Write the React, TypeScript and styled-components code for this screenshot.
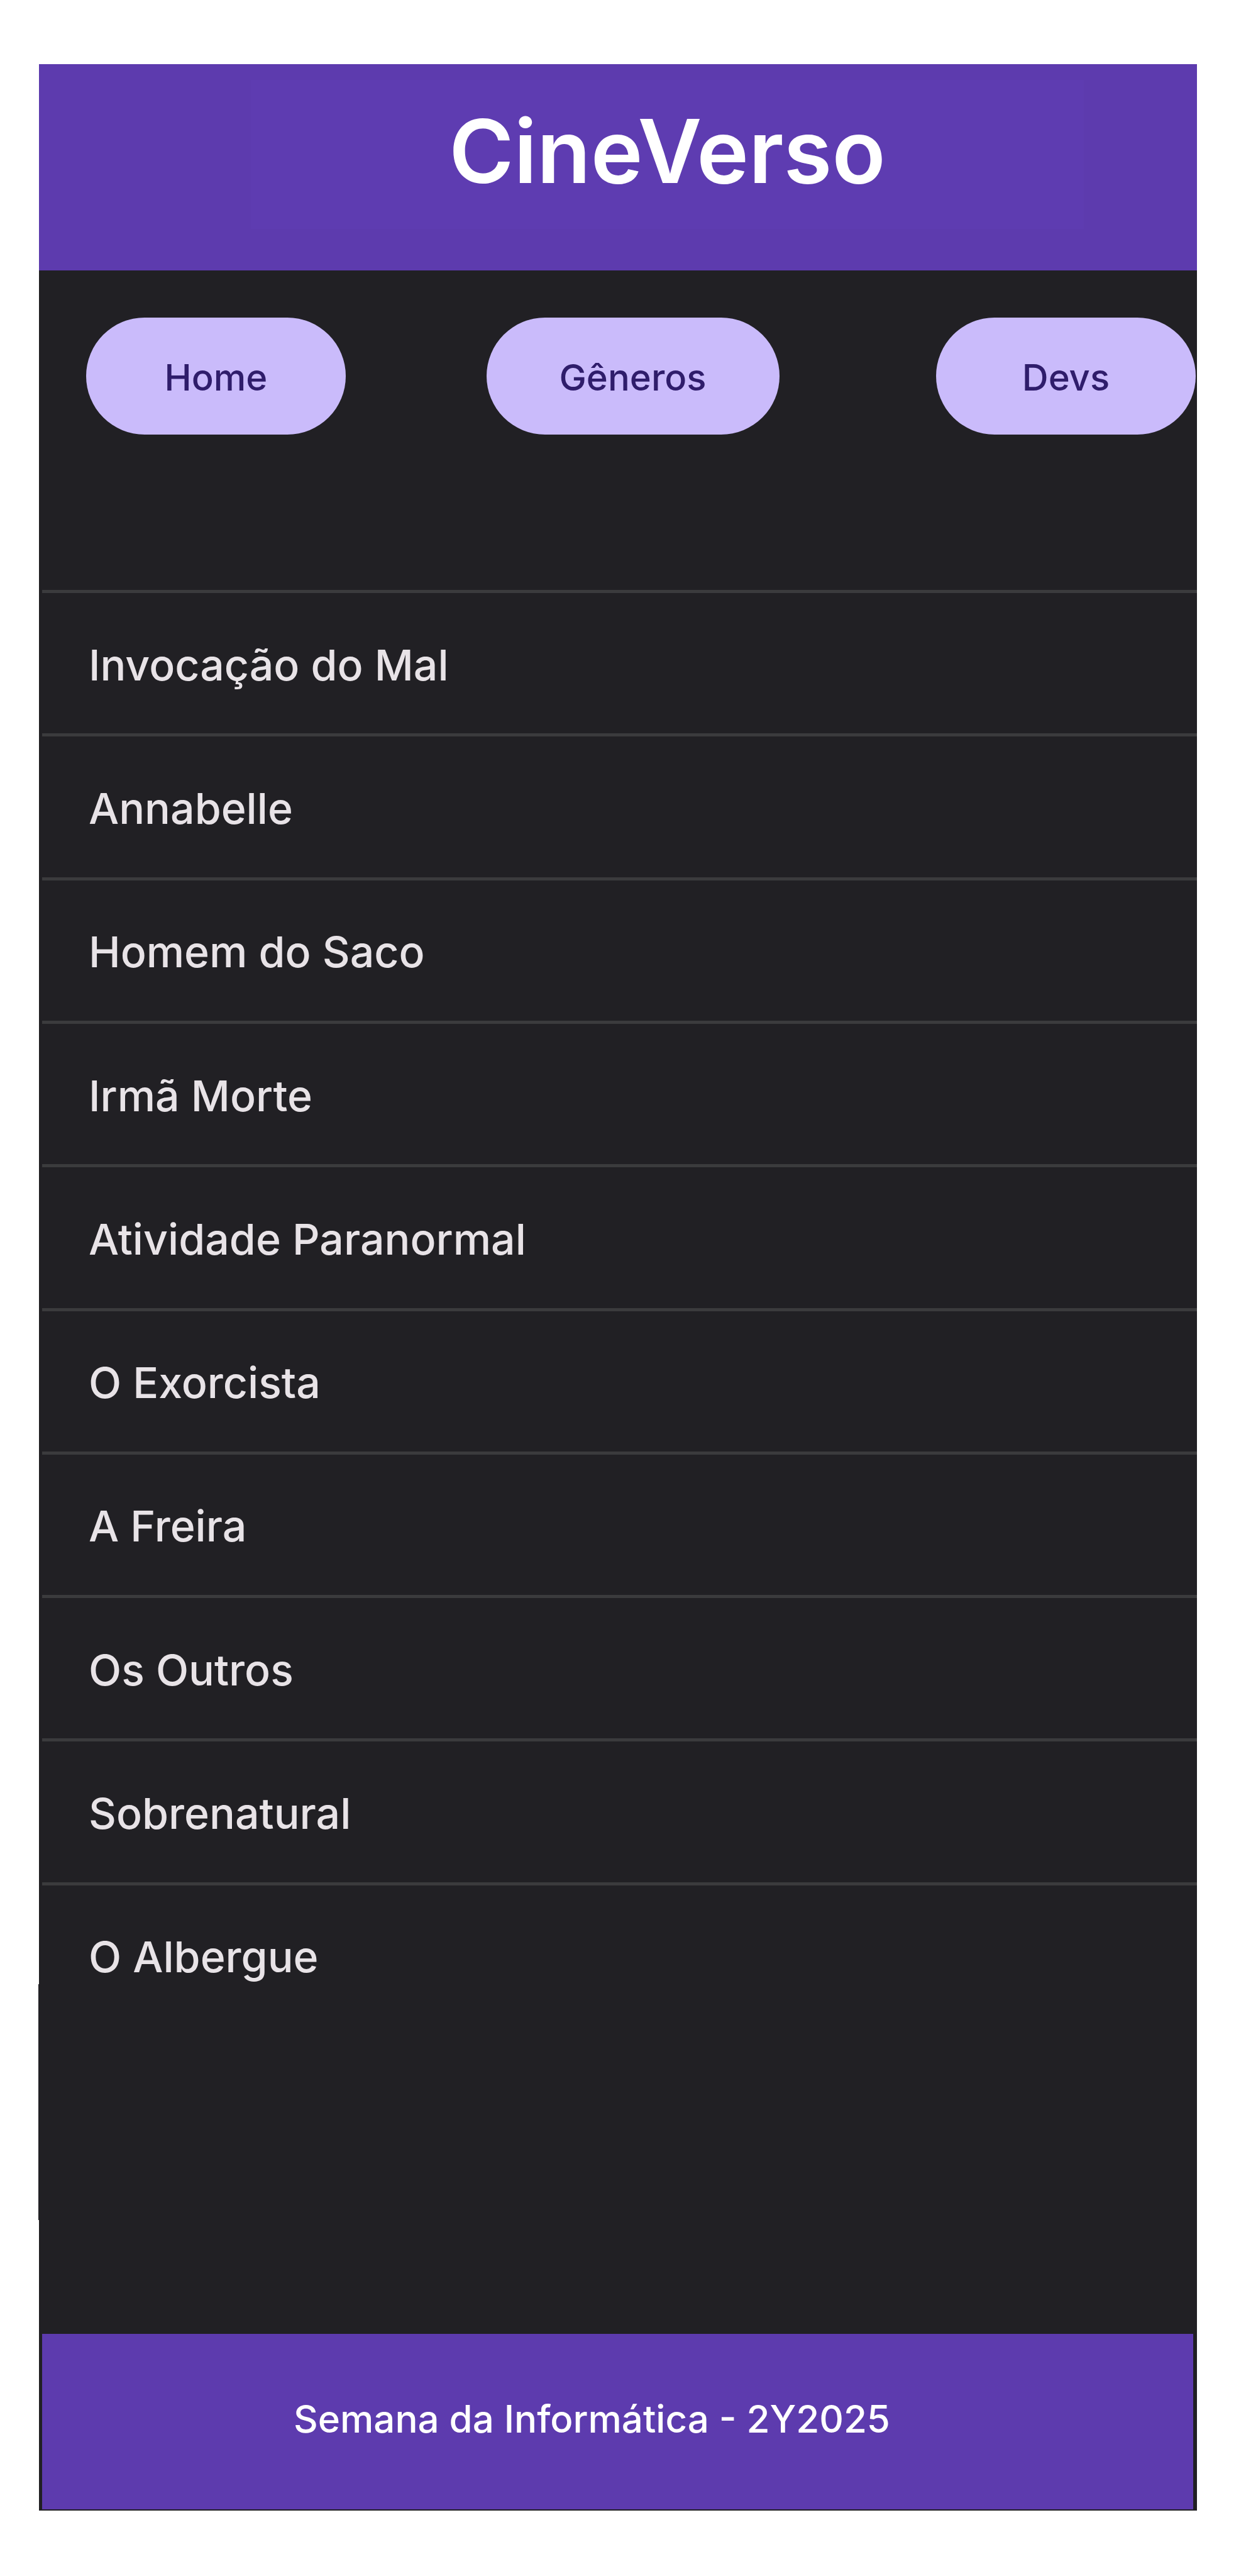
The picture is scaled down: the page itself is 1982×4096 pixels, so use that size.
import React from "react";
import styled, { createGlobalStyle } from "styled-components";

const color = {
  ink: "#212024",
  line: "#3b3b3d",
  purple: "#5d3bae",
  purpleSoft: "#5e3cb1",
  lilac: "#cabbfb",
  indigo: "#2f1d6b",
  text: "#e8e3e7",
};

const GlobalStyle = createGlobalStyle`
  *, *::before, *::after { box-sizing: border-box; }
  body {
    margin: 0;
    background: #fff;
    font-family: Inter, "Open Sans", sans-serif;
  }
`;

const Page = styled.div`
  padding: 102px 78px 104px 62px;
`;

const Frame = styled.div`
  display: flex;
  flex-direction: column;
  background: ${color.ink};
`;

const Header = styled.header`
  padding: 25px 180px 66px 337px;
  background: ${color.purple};
`;

const Brand = styled.h1`
  display: flex;
  align-items: center;
  justify-content: center;
  height: 237px;
  margin: 0;
  padding-bottom: 12px;
  background: ${color.purpleSoft};
  color: #fff;
  font-size: 140px;
  font-weight: 600;
  line-height: 160px;
`;

const Nav = styled.nav`
  display: grid;
  grid-template-columns: 637fr 716fr 413fr;
  justify-items: start;
  padding: 75px 2px 247px 75px;
`;

const Pill = styled.button<{ $wide?: boolean }>`
  width: ${(p) => (p.$wide ? 466 : 413)}px;
  height: 186px;
  padding: 4px 0 0;
  border: 0;
  border-radius: 93px;
  background: ${color.lilac};
  color: ${color.indigo};
  font: inherit;
  font-size: 58px;
  font-weight: 500;
  line-height: 72px;
  cursor: pointer;
`;

const MovieList = styled.ul`
  display: grid;
  grid-auto-rows: 1fr;
  min-height: 2283px;
  margin: 0 0 0 5px;
  padding: 0;
  list-style: none;
`;

const Movie = styled.li`
  display: flex;
  align-items: center;
  padding: 4px 0 0 74px;
  border-top: 5px solid ${color.line};
  color: ${color.text};
  font-size: 68px;
  font-weight: 500;
  line-height: 80px;
`;

const Lower = styled.div`
  position: relative;
  height: 490px;

  &::before {
    content: "";
    position: absolute;
    top: -66px;
    left: -1px;
    width: 1px;
    height: 375px;
    background: ${color.ink};
  }
`;

const Footer = styled.footer`
  display: flex;
  align-items: center;
  justify-content: center;
  height: 279px;
  margin: 0 6px 2px 5px;
  padding: 0 82px 10px 0;
  background: ${color.purple};
  color: #fff;
  font-size: 60px;
  font-weight: 500;
  line-height: 72px;
`;

const pages = [
  { label: "Home" },
  { label: "Gêneros", wide: true },
  { label: "Devs" },
];

const movies = [
  "Invocação do Mal",
  "Annabelle",
  "Homem do Saco",
  "Irmã Morte",
  "Atividade Paranormal",
  "O Exorcista",
  "A Freira",
  "Os Outros",
  "Sobrenatural",
  "O Albergue",
];

export default function App() {
  return (
    <>
      <GlobalStyle />
      <Page>
        <Frame>
          <Header>
            <Brand>CineVerso</Brand>
          </Header>
          <Nav>
            {pages.map((page) => (
              <Pill key={page.label} type="button" $wide={page.wide}>
                {page.label}
              </Pill>
            ))}
          </Nav>
          <main>
            <MovieList>
              {movies.map((title) => (
                <Movie key={title}>{title}</Movie>
              ))}
            </MovieList>
            <Lower />
          </main>
          <Footer>Semana da Informática - 2Y2025</Footer>
        </Frame>
      </Page>
    </>
  );
}
